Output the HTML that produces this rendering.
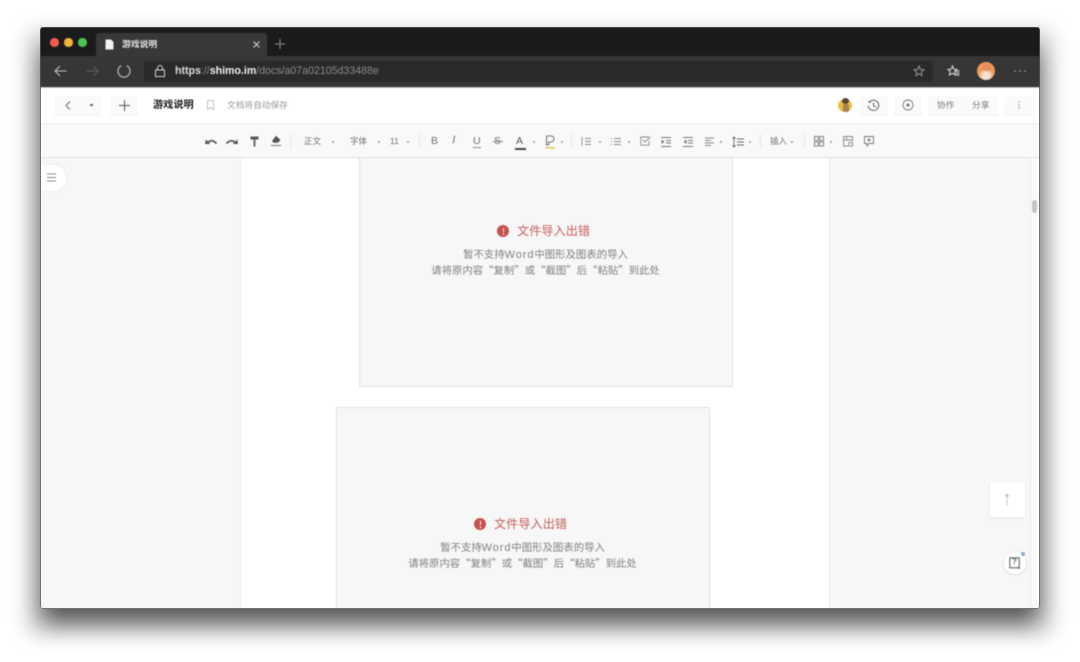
<!DOCTYPE html>
<html lang="zh">
<head>
<meta charset="utf-8">
<title>游戏说明</title>
<style>
html,body{margin:0;padding:0;width:1080px;height:662px;overflow:hidden;background:#fff;}
body{position:relative;font-family:"Liberation Sans","Noto Sans CJK SC",sans-serif;}
.a{position:absolute;}
.t{position:absolute;white-space:nowrap;line-height:1;}
#shadow{left:42px;top:50px;width:996px;height:572px;background:#000;opacity:.62;filter:blur(12px);}
#shadow2{left:28px;top:30px;width:1024px;height:604px;background:#000;opacity:.17;filter:blur(11px);}
#win{left:40px;top:27px;width:1000px;height:582px;border-radius:3px;overflow:hidden;background:#f7f7f7;}
#inner{position:absolute;left:-40px;top:-27px;width:1080px;height:662px;filter:blur(.55px);}
.btn{position:absolute;background:#fafafa;border-radius:2px;box-shadow:0 1px 1px #eee;}
svg{position:absolute;overflow:visible;}
.tb{font-size:8.5px;color:#6e6e6e;}
.caret{position:absolute;width:2px;height:2px;background:#999;border-radius:50%;top:141px;}
.sep{position:absolute;top:134px;width:1px;height:15px;background:#e6e6e6;}
.title{font-size:12.2px;color:#c4605e;}
.sub{font-size:10.4px;color:#808080;text-align:center;width:373px;font-family:"Noto Sans CJK SC","Liberation Sans",sans-serif;}
.sub span{font-family:"Liberation Sans",sans-serif;font-size:11px;letter-spacing:.9px;}
</style>
</head>
<body>
<div class="a" id="shadow2"></div>
<div class="a" id="shadow"></div>
<div class="a" id="win">
<div id="inner">

<!-- title bar -->
<div class="a" style="left:40px;top:27px;width:1000px;height:29px;background:#1b1b1b;"></div>
<div class="a" style="left:50px;top:38px;width:8.5px;height:8.5px;border-radius:50%;background:#ee5b52;"></div>
<div class="a" style="left:64px;top:38px;width:8.5px;height:8.5px;border-radius:50%;background:#f3b33b;"></div>
<div class="a" style="left:78px;top:38px;width:8.5px;height:8.5px;border-radius:50%;background:#4cc553;"></div>
<div class="a" style="left:96px;top:33px;width:171px;height:23px;background:#383838;border-radius:3px 3px 0 0;"></div>
<svg style="left:105px;top:39px" width="9" height="11"><path d="M0.5 0.5H6L8.5 3V10.5H0.5Z" fill="#f2f2f2"/></svg>
<div class="t" style="left:122px;top:40px;font-size:8.8px;font-weight:700;color:#e2e2e2;">游戏说明</div>
<svg style="left:253px;top:41px" width="7" height="7"><path d="M0.5 0.5L6.5 6.5M6.5 0.5L0.5 6.5" stroke="#cfcfcf" stroke-width="1.1"/></svg>
<svg style="left:275px;top:39px" width="10" height="10"><path d="M5 0V10M0 5H10" stroke="#8c8c8c" stroke-width="1"/></svg>

<!-- address bar -->
<div class="a" style="left:40px;top:56px;width:1000px;height:31px;background:#363636;"></div>
<div class="a" style="left:144px;top:61px;width:789px;height:21px;background:#2a2a2a;border-radius:3px;"></div>
<svg style="left:54px;top:65px" width="13" height="12"><path d="M12.5 6H1M6 1L1 6L6 11" fill="none" stroke="#c4c4c4" stroke-width="1.1"/></svg>
<svg style="left:86px;top:65px" width="13" height="12"><path d="M0.5 6H12M7 1L12 6L7 11" fill="none" stroke="#5c5c5c" stroke-width="1.1"/></svg>
<svg style="left:117px;top:64px" width="14" height="14"><path d="M4.3 1.8A6 6 0 1 0 9.7 1.8" fill="none" stroke="#c4c4c4" stroke-width="1.1"/></svg>
<svg style="left:155px;top:65px" width="10" height="12"><rect x="0.5" y="5" width="9" height="6.5" fill="none" stroke="#d0d0d0" stroke-width="1"/><path d="M2.5 5V3A2.5 2.5 0 0 1 7.5 3V5" fill="none" stroke="#d0d0d0" stroke-width="1"/></svg>
<div class="t" style="left:175px;top:66px;font-size:10.6px;color:#8a8a8a;"><b style="color:#dcdcdc">https</b>://<b style="color:#f0f0f0">shimo.im</b>/docs/a07a02105d33488e</div>
<svg style="left:913px;top:65px" width="12" height="12"><path d="M6 1L7.4 4.4L11 4.7L8.3 7L9.1 10.6L6 8.7L2.9 10.6L3.7 7L1 4.7L4.6 4.4Z" fill="none" stroke="#a0a0a0" stroke-width=".9"/></svg>
<svg style="left:947px;top:65px" width="13" height="12"><path d="M5.5 1L6.8 4.2L10 4.4L7.6 6.5L8.4 10L5.5 8.2L2.4 10L3.2 6.5L1 4.4L4.2 4.2Z" fill="none" stroke="#e2e2e2" stroke-width="1"/><path d="M8 6H12.5M9 8H12.5M9 10H12.5" stroke="#e2e2e2" stroke-width=".9"/></svg>
<div class="a" style="left:977px;top:62px;width:18px;height:18px;border-radius:50%;background:radial-gradient(circle at 50% 78%,#f4e2d4 0 22%,#e89a5c 45%,#ee9a4e 100%);"></div>
<div class="a" style="left:982px;top:64px;width:9px;height:7px;border-radius:50%;background:#e8875a;opacity:.8;"></div>
<svg style="left:1014px;top:70px" width="12" height="2"><circle cx="1" cy="1" r=".8" fill="#b0b0b0"/><circle cx="6" cy="1" r=".8" fill="#b0b0b0"/><circle cx="11" cy="1" r=".8" fill="#b0b0b0"/></svg>

<!-- header -->
<div class="a" style="left:40px;top:87px;width:1000px;height:36px;background:#fff;border-top:1px solid #bbb;box-sizing:border-box;"></div>
<div class="btn" style="left:55px;top:96px;width:46px;height:19px;"></div>
<svg style="left:65px;top:101px" width="6" height="9"><path d="M5 .5L1 4.5L5 8.5" fill="none" stroke="#666" stroke-width="1"/></svg>
<div class="a" style="left:90px;top:104px;width:3px;height:2px;background:#666;"></div>
<div class="btn" style="left:111px;top:96px;width:27px;height:19px;"></div>
<svg style="left:119px;top:100px" width="11" height="11"><path d="M5.5 0V11M0 5.5H11" stroke="#555" stroke-width="1"/></svg>
<div class="t" style="left:153px;top:101px;font-size:10.2px;font-weight:700;color:#1c1c1c;">游戏说明</div>
<svg style="left:207px;top:100px" width="7" height="10"><path d="M.5 .5H6.500V9.500L3.500 7.500L.5 9.500Z" fill="none" stroke="#bbb" stroke-width=".9"/></svg>
<div class="t" style="left:227px;top:101px;font-size:8.7px;color:#999;">文档将自动保存</div>
<div class="a" style="left:838px;top:99px;width:14px;height:13px;border-radius:50%;background:#e9bf3f;"></div>
<div class="a" style="left:842px;top:98px;width:7px;height:6px;border-radius:50%;background:#5a4436;"></div>
<div class="a" style="left:843px;top:104px;width:6px;height:8px;background:#a8805e;border-radius:2px;"></div>
<div class="btn" style="left:860px;top:96px;width:27px;height:19px;"></div>
<svg style="left:867px;top:99px" width="13" height="13"><path d="M2.300 3.200A5.200 5.200 0 1 1 1.300 6.500" fill="none" stroke="#666" stroke-width="1"/><path d="M.8 2.200L2.400 4.300L4.400 3" fill="#666"/><path d="M6.500 3.500V6.800L8.800 8" fill="none" stroke="#666" stroke-width="1"/></svg>
<div class="btn" style="left:894px;top:96px;width:28px;height:19px;"></div>
<svg style="left:902px;top:99px" width="12" height="12"><circle cx="6" cy="6" r="5" fill="none" stroke="#777" stroke-width=".9"/><circle cx="6" cy="6" r="1.600" fill="#777"/></svg>
<div class="btn" style="left:929px;top:96px;width:69px;height:19px;"></div>
<div class="t" style="left:937px;top:101px;font-size:8.7px;color:#777;">协作</div>
<div class="t" style="left:972px;top:101px;font-size:8.7px;color:#777;">分享</div>
<div class="btn" style="left:1005px;top:96px;width:28px;height:19px;"></div>
<svg style="left:1018px;top:101px" width="2" height="8"><circle cx="1" cy="1" r=".7" fill="#888"/><circle cx="1" cy="4" r=".7" fill="#888"/><circle cx="1" cy="7" r=".7" fill="#888"/></svg>

<!-- toolbar -->
<div class="a" style="left:40px;top:123px;width:1000px;height:35px;background:#f9f9f9;border-top:1px solid #ececec;border-bottom:1px solid #e2e2e2;box-sizing:border-box;"></div>
<svg style="left:205px;top:137px" width="12" height="8"><path d="M2.500 6.500C4.500 2.800 8 2.800 11.500 6.500" fill="none" stroke="#555" stroke-width="1.800"/><path d="M0 7H5.200L0.800 2.500Z" fill="#555"/></svg>
<svg style="left:226px;top:137px" width="12" height="8"><path d="M9.500 6.500C7.500 2.800 4 2.800 .5 6.500" fill="none" stroke="#555" stroke-width="1.800"/><path d="M12 7H6.800L11.200 2.500Z" fill="#555"/></svg>
<svg style="left:250px;top:136px" width="9" height="11"><path d="M.5 .5H8.500V3.500H.5Z" fill="#555"/><path d="M3.500 3.500H5.500V10.500H3.500Z" fill="#6a6a6a"/></svg>
<svg style="left:270px;top:135px" width="12" height="12"><path d="M6 .8L10.500 5L8 7.800H3.500L2 6Z" fill="#555"/><path d="M1 10.500H11" stroke="#777" stroke-width="1"/></svg>
<div class="sep" style="left:290px"></div>
<div class="t tb" style="left:304px;top:137px;">正文</div><div class="caret" style="left:332px"></div>
<div class="t tb" style="left:350px;top:137px;">字体</div><div class="caret" style="left:378px"></div>
<div class="t tb" style="left:390px;top:137px;">11</div><div class="caret" style="left:407px"></div>
<div class="sep" style="left:419px"></div>
<div class="t" style="left:431px;top:136px;font-size:10.5px;color:#6e6e6e;">B</div>
<div class="t" style="left:452px;top:136px;font-size:10.5px;font-style:italic;color:#6e6e6e;font-family:'Liberation Serif',serif;">I</div>
<div class="t" style="left:473px;top:136px;font-size:10.5px;color:#6e6e6e;">U</div>
<div class="a" style="left:473px;top:147px;width:8px;height:1px;background:#888;"></div>
<div class="t" style="left:494px;top:136px;font-size:10.5px;color:#6e6e6e;">S</div>
<div class="a" style="left:493px;top:141px;width:10px;height:1px;background:#888;"></div>
<div class="t" style="left:516px;top:136px;font-size:10.5px;color:#555;">A</div>
<div class="a" style="left:515px;top:148px;width:11px;height:1.500px;background:#444;"></div>
<div class="caret" style="left:533px"></div>
<svg style="left:545px;top:135px" width="11" height="14"><path d="M1.500 1H6A3 3 0 0 1 6 7H3.500V10H1.500Z" fill="none" stroke="#777" stroke-width="1.100"/><path d="M0 12.800H10" stroke="#e8c455" stroke-width="1.500"/></svg>
<div class="caret" style="left:561px"></div>
<div class="sep" style="left:571px"></div>
<svg style="left:581px;top:137px" width="10" height="9"><path d="M1 0V9M4 1.500H10M4 4.500H10M4 7.500H10" stroke="#8a8a8a" stroke-width=".9"/></svg>
<div class="caret" style="left:599px"></div>
<svg style="left:610px;top:137px" width="11" height="9"><path d="M1 1.500H2M1 4.500H2M1 7.500H2M4 1.500H11M4 4.500H11M4 7.500H11" stroke="#8a8a8a" stroke-width=".9"/></svg>
<div class="caret" style="left:628px"></div>
<svg style="left:640px;top:136px" width="11" height="10"><path d="M9 1H.8V9.200H9V5" fill="none" stroke="#888" stroke-width=".9"/><path d="M3 4L5 6L10.500 1" fill="none" stroke="#888" stroke-width=".9"/></svg>
<svg style="left:661px;top:137px" width="10" height="10"><path d="M0 .5H10M5 3.500H10M5 6H10M0 9.500H10" stroke="#777" stroke-width=".9"/><path d="M.5 2.500L3.500 4.800L.5 7Z" fill="#777"/></svg>
<svg style="left:683px;top:137px" width="10" height="10"><path d="M0 .5H10M5 3.500H10M5 6H10M0 9.500H10" stroke="#777" stroke-width=".9"/><path d="M3.500 2.500L.5 4.800L3.500 7Z" fill="#777"/></svg>
<svg style="left:705px;top:137px" width="9" height="9"><path d="M0 1H9M0 3.500H6M0 6H9M0 8.500H6" stroke="#888" stroke-width=".9"/></svg>
<div class="caret" style="left:720px"></div>
<svg style="left:732px;top:137px" width="12" height="10"><path d="M2 0V10M.5 1.500L2 0L3.500 1.500M.5 8.500L2 10L3.500 8.500M5 2H12M5 5H12M5 8H12" fill="none" stroke="#666" stroke-width=".9"/></svg>
<div class="caret" style="left:749px"></div>
<div class="sep" style="left:760px"></div>
<div class="t tb" style="left:770px;top:137px;">插入</div><div class="caret" style="left:791px"></div>
<div class="sep" style="left:804px"></div>
<svg style="left:814px;top:136px" width="10" height="11"><rect x=".5" y=".5" width="3.800" height="4" fill="none" stroke="#777" stroke-width=".9"/><rect x="5.700" y=".5" width="3.800" height="4" fill="none" stroke="#777" stroke-width=".9"/><rect x=".5" y="6" width="3.800" height="4" fill="none" stroke="#777" stroke-width=".9"/><rect x="5.700" y="6" width="3.800" height="4" fill="none" stroke="#777" stroke-width=".9"/></svg>
<div class="caret" style="left:830px"></div>
<svg style="left:843px;top:136px" width="10" height="11"><path d="M5 10H.5V.5H9.500V5M.5 4H9.500M3.500 .5V4" fill="none" stroke="#888" stroke-width=".9"/><rect x="6" y="6.500" width="3.500" height="3.500" fill="none" stroke="#888" stroke-width=".9"/></svg>
<svg style="left:864px;top:136px" width="10" height="11"><path d="M.5 .5H9.500V7.500H5L3 10V7.500H.5Z" fill="none" stroke="#777" stroke-width=".9"/><path d="M5 2V6M3 4H7" stroke="#777" stroke-width=".9"/></svg>

<!-- content -->
<div class="a" style="left:40px;top:158px;width:1000px;height:451px;background:#f7f7f7;"></div>
<div class="a" style="left:240px;top:158px;width:590px;height:451px;background:#fff;border-left:1px solid #ececec;border-right:1px solid #ececec;box-sizing:border-box;"></div>
<div class="a" style="left:1030px;top:158px;width:10px;height:451px;background:#fafafa;border-left:1px solid #ececec;box-sizing:border-box;"></div>
<div class="a" style="left:1032px;top:200px;width:5px;height:13px;background:#c4c4c4;border-radius:3px;"></div>

<div class="a" style="left:40px;top:165px;width:26px;height:26px;background:#fff;border-radius:0 13px 13px 0;box-shadow:0 0 3px #e6e6e6;"></div>
<svg style="left:47px;top:173px" width="10" height="9"><path d="M0 1H9M0 4.500H9M0 8H9" stroke="#888" stroke-width="1.100"/></svg>

<!-- box 1 -->
<div class="a" style="left:359px;top:158px;width:374px;height:229px;background:#f7f7f7;border:1px solid #e2e2e2;border-top:none;box-sizing:border-box;"></div>
<div class="a" style="left:497px;top:225px;width:12px;height:12px;border-radius:50%;background:#c8504c;"></div>
<div class="a" style="left:502.500px;top:227.500px;width:1.500px;height:4.500px;background:#fff;"></div>
<div class="a" style="left:502.500px;top:233px;width:1.500px;height:1.500px;background:#fff;"></div>
<div class="t title" style="left:517px;top:224.500px;">文件导入出错</div>
<div class="t sub" style="left:359px;top:248.500px;">暂不支持<span>Word</span>中图形及图表的导入</div>
<div class="t sub" style="left:359px;top:265px;">请将原内容“复制”或“截图”后“粘贴”到此处</div>

<!-- box 2 -->
<div class="a" style="left:336px;top:407px;width:374px;height:202px;background:#f7f7f7;border:1px solid #e2e2e2;border-bottom:none;box-sizing:border-box;"></div>
<div class="a" style="left:474px;top:518px;width:12px;height:12px;border-radius:50%;background:#c8504c;"></div>
<div class="a" style="left:479.500px;top:520.500px;width:1.500px;height:4.500px;background:#fff;"></div>
<div class="a" style="left:479.500px;top:526px;width:1.500px;height:1.500px;background:#fff;"></div>
<div class="t title" style="left:494px;top:517.500px;">文件导入出错</div>
<div class="t sub" style="left:336px;top:541.500px;">暂不支持<span>Word</span>中图形及图表的导入</div>
<div class="t sub" style="left:336px;top:558px;">请将原内容“复制”或“截图”后“粘贴”到此处</div>

<!-- floaters -->
<div class="a" style="left:990px;top:482px;width:35px;height:35px;background:#fff;box-shadow:0 1px 3px #e8e8e8;"></div>
<svg style="left:1004px;top:493px" width="6" height="13"><path d="M3 1V13" stroke="#c4c4c4" stroke-width=".9"/><path d="M0.500 3.500L3 .5L5.500 3.500Z" fill="#c0c0c0"/></svg>
<div class="a" style="left:1004px;top:552px;width:22px;height:22px;border-radius:50%;background:#fff;box-shadow:0 1px 3px #ddd;"></div>
<svg style="left:1009px;top:557px" width="12" height="12"><path d="M.8 .8H10.200V10.800H.8Z" fill="none" stroke="#666" stroke-width="1.100"/><path d="M8 10.800L11 11.500" stroke="#666" stroke-width="1"/></svg>
<div class="t" style="left:1012px;top:558px;font-size:8px;font-weight:700;color:#666;">?</div>
<div class="a" style="left:1021px;top:552px;width:4px;height:4px;border-radius:50%;background:#8da6d8;"></div>

</div>
<div class="a" style="left:0;top:0;width:1000px;height:582px;box-shadow:inset 0 0 0 1px rgba(70,70,70,.75);border-radius:3px;"></div>
</div>
</body>
</html>
